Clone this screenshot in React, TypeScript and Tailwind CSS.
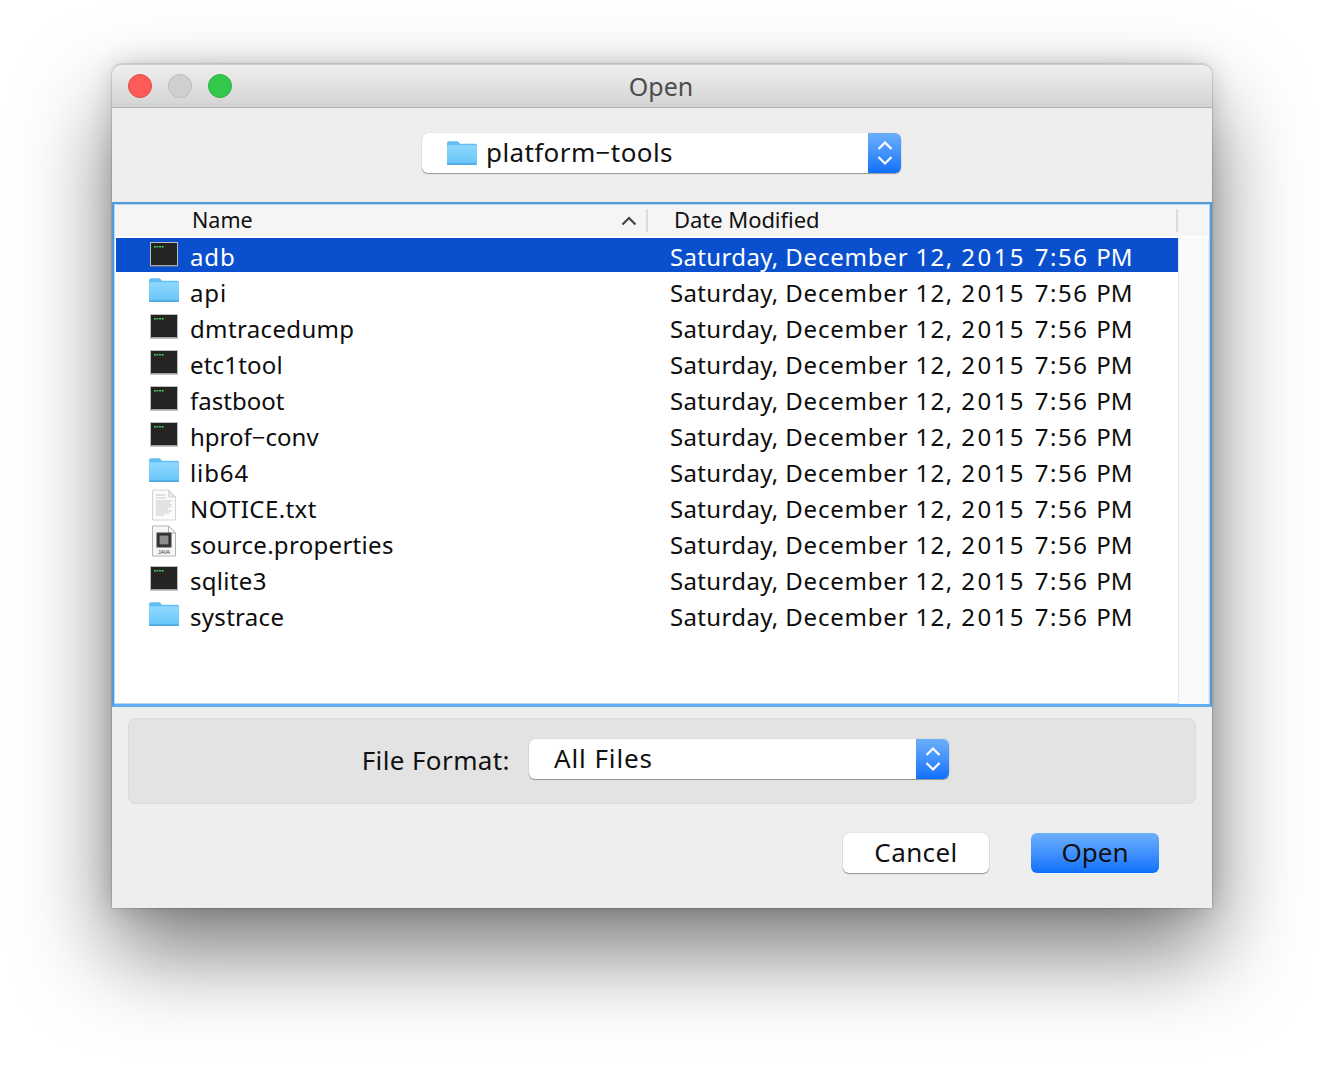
const font = "[font-family:'Noto_Sans','Open_Sans',sans-serif]";

function Folder({ className = "" }: { className?: string }) {
  return (
    <svg viewBox="1 1 28.2 22.6" preserveAspectRatio="none" className={className}>
      <defs>
        <linearGradient id="fg" x1="0" y1="0" x2="0" y2="1">
          <stop offset="0" stopColor="#8fd8fd" />
          <stop offset="1" stopColor="#66c4f9" />
        </linearGradient>
      </defs>
      <path d="M1 3.500C1 2 1.700 1.200 3 1.200h7c1 0 1.600.4 2.200 1.200l1 1.300H27.500c1 0 1.700.7 1.700 1.700v16.300c0 1-.7 1.700-1.700 1.700h-25C1.500 23.400 1 22.800 1 21.800Z" fill="#62bdf2" />
      <path d="M1 6.500c0-1 .6-1.600 1.600-1.600h24.800c1 0 1.800.6 1.800 1.600v15.300c0 1-.7 1.700-1.700 1.700h-25C1.500 23.500 1 22.800 1 21.800Z" fill="url(#fg)" />
      <path d="M1 22h28.200v.4c0 .7-.7 1.200-1.700 1.200h-25c-1 0-1.500-.5-1.500-1.200Z" fill="#4fa8e0" />
    </svg>
  );
}

function Terminal() {
  return (
    <svg viewBox="0 0 30 26" className="w-[30px] h-[26px]">
      <rect x="1.500" y="1.500" width="27" height="23" fill="#242424" stroke="#bdbdbd" strokeWidth="1" />
      <rect x="1" y="24.500" width="28" height="1" fill="#8a8a8a" />
      <path d="M5 5.800h1.800M7.600 5.800h1.800M10.200 5.800h1.800M12.800 5.800h1.800" stroke="#4fd05c" strokeWidth="1.500" />
    </svg>
  );
}

function TextDoc() {
  return (
    <svg viewBox="0 0 30 32" className="w-[30px] h-[32px]">
      <path d="M3.500 1h16l7 7v23h-23Z" fill="#fbfbfb" stroke="#d4d4d4" />
      <path d="M19.500 1v7h7Z" fill="#e6e6e6" stroke="#d4d4d4" />
      <path d="M7 6h9M7 9h10M7 12h16M7 14h14M7 16h16M7 18h15M7 20h12M7 22h16M7 24h13M7 26h8" stroke="#c9c9c9" strokeWidth="1" />
    </svg>
  );
}

function JavaDoc() {
  return (
    <svg viewBox="0 0 30 32" className="w-[30px] h-[32px]">
      <path d="M3.500 1h16l7 7v23h-23Z" fill="#f6f6f6" stroke="#b4b4b4" />
      <path d="M19.500 1v7h7Z" fill="#ffffff" stroke="#b4b4b4" />
      <rect x="7.500" y="7.500" width="15" height="15" fill="#3b3b3b" />
      <rect x="10" y="10" width="10" height="10" fill="#8e8e8e" stroke="#222" />
      <text x="15" y="29" textAnchor="middle" fontSize="5" fill="#333" fontFamily="'Liberation Sans',sans-serif">JAVA</text>
    </svg>
  );
}

function Stepper({ w }: { w: string }) {
  return (
    <div className={`${w} h-full shrink-0 flex items-center justify-center rounded-r-[6px] bg-gradient-to-b from-[#6cb0fb] to-[#0a6ffc]`}>
      <svg viewBox="0 0 18 28" className="w-[18px] h-[28px]" fill="none" stroke="#fff" strokeWidth="2.200">
        <path d="M2.500 10 9 3.500l6.500 6.500" />
        <path d="M2.500 18 9 24.500l6.500-6.500" />
      </svg>
    </div>
  );
}

const rows: [string, string, string][] = [
  ["adb", "t", "tracking-[0.9px]"],
  ["api", "f", "tracking-[0.9px]"],
  ["dmtracedump", "t", "tracking-[0.35px]"],
  ["etc1tool", "t", "tracking-[0.2px]"],
  ["fastboot", "t", "tracking-[0px]"],
  ["hprof−conv", "t", "tracking-[0px]"],
  ["lib64", "f", "tracking-[0.9px]"],
  ["NOTICE.txt", "d", "tracking-[0.4px]"],
  ["source.properties", "j", "tracking-[0.3px]"],
  ["sqlite3", "t", "tracking-[0.3px]"],
  ["systrace", "f", "tracking-[0.3px]"],
];

function DateText() {
  return (
    <>
      <span className="tracking-[0.35px]">Saturday, </span>
      <span className="tracking-[0.8px]">December </span>
      <span className="tracking-[1.4px]">12, </span>
      <span className="tracking-[2.5px]">2015 </span>
      <span className="tracking-[1.5px]">7:56 </span>
      <span className="tracking-[0.1px]">PM</span>
    </>
  );
}

function Row({ name, kind, track, selected }: { name: string; kind: string; track: string; selected: boolean }) {
  return (
    <div className="h-[36px] flex items-start">
      <div className={`h-[34px] w-full flex items-center ${selected ? "bg-[#0a50ce] text-white" : "text-[#0d0d0d]"}`}>
        <div className="w-[74px] shrink-0 pl-[33px] flex items-center h-full">
          {kind === "t" && <div className="-translate-y-[1px]"><Terminal /></div>}
          {kind === "f" && <div className="-translate-y-[1px]"><Folder className="w-[30px] h-[24px]" /></div>}
          {kind === "d" && <div className="-translate-y-[2px]"><TextDoc /></div>}
          {kind === "j" && <div className="-translate-y-[2px]"><JavaDoc /></div>}
        </div>
        <div className={`w-[480px] shrink-0 text-[24px] leading-[34px] translate-y-[2px] ${track}`}>{name}</div>
        <div className="text-[24px] leading-[34px] whitespace-nowrap translate-y-[2px]"><DateText /></div>
      </div>
    </div>
  );
}

export default function App() {
  return (
    <div className={`w-[1324px] h-[1068px] bg-white pt-[64px] pl-[112px] overflow-hidden ${font}`}>
      <div className="w-[1100px] h-[844px] flex flex-col rounded-t-[10px] bg-[#eeeeee] shadow-[0_44px_90px_rgba(0,0,0,0.52),0_0_26px_rgba(0,0,0,0.16),0_0_2px_rgba(0,0,0,0.4)]">
        <div className="h-[44px] shrink-0 flex items-center relative rounded-t-[10px] border-t border-[#cfcfcf] border-b border-b-[#b0b0b0] bg-gradient-to-b from-[#efefef] to-[#d3d3d3]">
          <div className="flex gap-[16px] pl-[16px]">
            <div className="w-[24px] h-[24px] rounded-full bg-[#fc5b57] border border-[#e14942]" />
            <div className="w-[24px] h-[24px] rounded-full bg-[#d0d0d0] border border-[#bdbdbd]" />
            <div className="w-[24px] h-[24px] rounded-full bg-[#34c84a] border border-[#2cb03e]" />
          </div>
          <div className="absolute inset-0 flex items-center justify-center text-[25px] text-[#4d4d4d] pt-[2px] pr-[2px]">Open</div>
        </div>

        <div className="h-[94px] shrink-0 pt-[25px] pl-[310px]">
          <div className="w-[479px] h-[40px] flex items-stretch rounded-[6px] bg-white shadow-[0_1px_1px_rgba(0,0,0,0.35),0_0_1px_rgba(0,0,0,0.3)]">
            <div className="flex-1 flex items-center pl-[25px] gap-[9px]">
              <Folder className="w-[30px] h-[24px]" />
              <span className="text-[26px] tracking-[0.4px] text-[#111] -translate-y-[1px]">platform−tools</span>
            </div>
            <Stepper w="w-[33px]" />
          </div>
        </div>

        <div className="h-[505px] shrink-0 border-2 border-b-[3px] border-[#4f9bdc] border-b-[#62adf0] bg-white flex flex-col p-[1px] pb-0 shadow-[inset_0_0_0_1px_#b9d6f0]">
          <div className="h-[31px] shrink-0 flex items-center bg-[#f5f5f5] text-[#111] text-[22px]">
            <div className="w-[533px] shrink-0 pl-[77px] flex items-center justify-between pr-[9px] border-r-2 border-[#dcdcdc] h-[23px]">
              <span className="text-[21.5px]">Name</span>
              <svg viewBox="0 0 16 10" className="w-[16px] h-[10px]" fill="none" stroke="#444" strokeWidth="2.200">
                <path d="M1.500 8.500 8 2l6.500 6.500" />
              </svg>
            </div>
            <div className="flex-1 pl-[26px] h-[23px] flex items-center border-r-2 border-[#dcdcdc] mr-[31px]">
              <span className="tracking-[-0.05px] -translate-y-[1px]">Date Modified</span>
            </div>
          </div>
          <div className="flex-1 flex pt-[2px] min-h-0">
            <div className="w-[1063px] shrink-0 pl-[1px]">
              {rows.map(([n, k, t], i) => (
                <Row key={n} name={n} kind={k} track={t} selected={i === 0} />
              ))}
            </div>
            <div className="flex-1 bg-[#fafafa] border-l border-[#e6e6e6] border-r border-r-[#ececec]" />
          </div>
        </div>

        <div className="flex-1 px-[16px] pt-[11px] flex flex-col">
          <div className="h-[86px] rounded-[8px] bg-[#e3e3e3] border border-[#dbdbdb] pt-[20px] flex items-start">
            <div className="w-[381px] shrink-0 text-right text-[26px] leading-[40px] tracking-[0.4px] text-[#111] translate-y-[1px]">File Format:</div>
            <div className="ml-[19px] w-[420px] h-[40px] flex items-stretch rounded-[6px] bg-white shadow-[0_1px_1px_rgba(0,0,0,0.35),0_0_1px_rgba(0,0,0,0.3)]">
              <div className="flex-1 flex items-center pl-[25px] text-[26px] tracking-[0.9px] text-[#111] -translate-y-[1px]">All Files</div>
              <Stepper w="w-[33px]" />
            </div>
          </div>
          <div className="flex justify-end gap-[42px] pt-[29px] pr-[37px]">
            <button className="w-[146px] h-[40px] rounded-[6px] bg-white shadow-[0_1px_1px_rgba(0,0,0,0.35),0_0_1px_rgba(0,0,0,0.35)] text-[26px] tracking-[0.4px] text-[#111]"><span className="block -translate-y-[1px]">Cancel</span></button>
            <button className="w-[128px] h-[40px] rounded-[6px] bg-gradient-to-b from-[#6cb0fb] to-[#0a6ffc] text-[26px] tracking-[0px] text-[#111]"><span className="block -translate-y-[1px]">Open</span></button>
          </div>
        </div>
      </div>
    </div>
  );
}
